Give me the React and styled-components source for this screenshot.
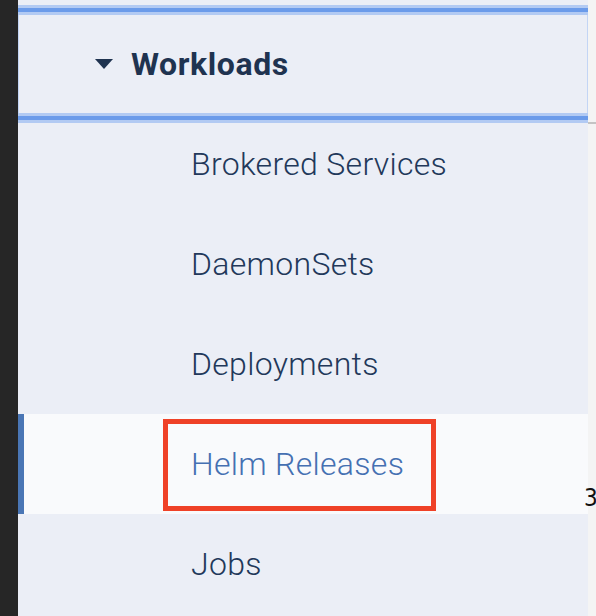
import React from "react"
import styled, { createGlobalStyle } from "styled-components"

const GlobalStyle = createGlobalStyle`
  html, body {
    margin: 0;
    padding: 0;
    background: #f4f4f4;
  }
  body {
    font-family: Roboto, "Noto Sans", sans-serif;
  }
`

const Page = styled.div`
  display: flex;
  width: 596px;
  height: 616px;
  overflow: hidden;
`

const Rail = styled.div`
  width: 18px;
  flex-shrink: 0;
  background: #262626;
`

const Nav = styled.nav`
  width: 570px;
  flex-shrink: 0;
  padding-top: 5px;
  background: #ebeef6;
  display: flex;
  flex-direction: column;
`

const Band = styled.div`
  height: 10px;
  flex-shrink: 0;
  background: linear-gradient(
    #b2caf3 0 3px,
    #6b9bea 3px 7px,
    #b2caf3 7px 10px
  );
  margin-bottom: ${(p) => (p.$overlap ? "-9px" : "0")};
  position: relative;
  z-index: 1;
`

const Header = styled.div`
  height: 98px;
  flex-shrink: 0;
  display: flex;
  align-items: center;
  gap: 18px;
  padding-left: 76px;
  border-left: 1px solid #c3d5f5;
  border-right: 1px solid #c3d5f5;
`

const Title = styled.span`
  font-size: 32px;
  font-weight: 700;
  letter-spacing: 0.6px;
  color: #1f3350;
`

const Item = styled.div`
  height: 100px;
  flex-shrink: 0;
  display: flex;
  align-items: center;
  position: relative;
  padding-left: ${(p) => (p.$active ? "167px" : "173px")};
  border-left: ${(p) => (p.$active ? "6px solid #4a76b5" : "none")};
  background: ${(p) => (p.$active ? "#f9fafc" : "transparent")};
  font-size: 32px;
  font-weight: 300;
  letter-spacing: 0.3px;
  color: ${(p) => (p.$active ? "#4570b2" : "#22385a")};
`

const Highlight = styled.div`
  position: absolute;
  left: 139px;
  top: 5px;
  width: 263px;
  height: 82px;
  border: 5px solid #ef4127;
  pointer-events: none;
`

const Gutter = styled.div`
  width: 8px;
  flex-shrink: 0;
  display: flex;
  flex-direction: column;
  align-items: flex-start;
  background: #f4f4f4;
  position: relative;
  z-index: 2;
`

const Rule = styled.div`
  align-self: stretch;
  height: 2px;
  margin-top: 122px;
  background: #c4c4c4;
`

const Stray = styled.span`
  margin-top: 362px;
  margin-left: -4px;
  font-family: "DejaVu Sans Condensed", "Liberation Sans", sans-serif;
  font-size: 24px;
  line-height: 1;
  color: #111;
`

const Caret = () => (
  <svg width="18" height="10" viewBox="0 0 18 10">
    <path d="M0 0 H18 L9 10 Z" fill="#1f3350" />
  </svg>
)

const items = [
  "Brokered Services",
  "DaemonSets",
  "Deployments",
  "Helm Releases",
  "Jobs",
]

export default function App() {
  return (
    <>
      <GlobalStyle />
      <Page>
        <Rail />
        <Nav>
          <Band />
          <Header>
            <Caret />
            <Title>Workloads</Title>
          </Header>
          <Band $overlap />
          {items.map((name) => {
            const active = name === "Helm Releases"
            return (
              <Item key={name} $active={active}>
                {name}
                {active && <Highlight />}
              </Item>
            )
          })}
        </Nav>
        <Gutter>
          <Rule />
          <Stray>3</Stray>
        </Gutter>
      </Page>
    </>
  )
}
